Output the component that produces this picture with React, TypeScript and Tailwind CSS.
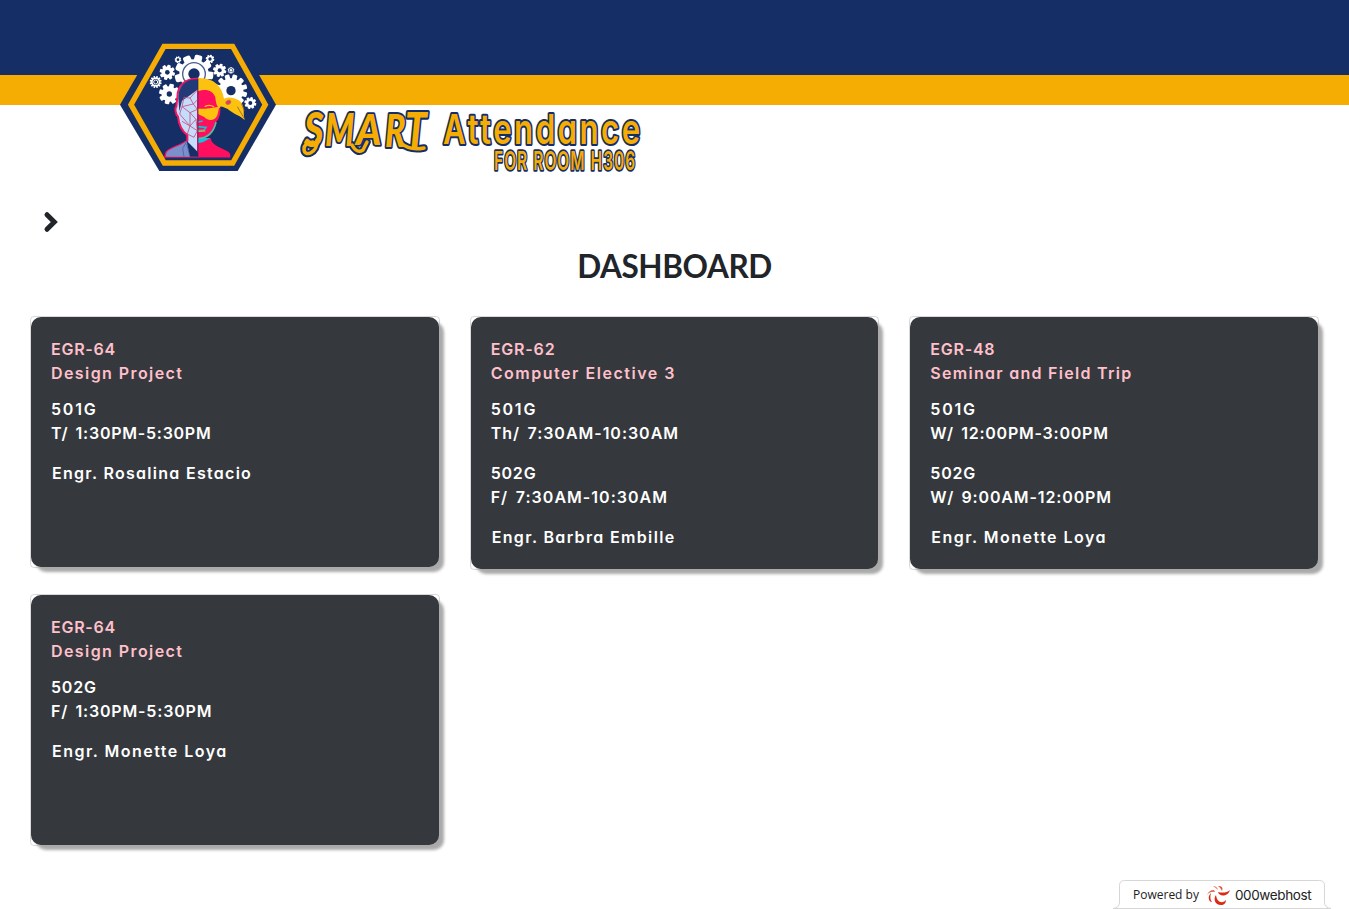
import { ReactNode } from "react";

type Line = { text: string; tracking: string };
type Course = { code: Line; title: Line; slots: [Line, Line][]; teacher: Line };

const s501: Line = { text: "501G", tracking: "tracking-[1.8px]" };
const s502: Line = { text: "502G", tracking: "tracking-[0.8px]" };

const courses: Course[] = [
  {
    code: { text: "EGR-64", tracking: "tracking-[0.75px]" },
    title: { text: "Design Project", tracking: "tracking-[1.42px]" },
    slots: [[s501, { text: "T/ 1:30PM-5:30PM", tracking: "tracking-[0.75px]" }]],
    teacher: { text: "Engr. Rosalina Estacio", tracking: "tracking-[1.29px]" },
  },
  {
    code: { text: "EGR-62", tracking: "tracking-[0.85px]" },
    title: { text: "Computer Elective 3", tracking: "tracking-[1.53px]" },
    slots: [
      [s501, { text: "Th/ 7:30AM-10:30AM", tracking: "tracking-[0.97px]" }],
      [s502, { text: "F/ 7:30AM-10:30AM", tracking: "tracking-[1.03px]" }],
    ],
    teacher: { text: "Engr. Barbra Embille", tracking: "tracking-[1.35px]" },
  },
  {
    code: { text: "EGR-48", tracking: "tracking-[0.75px]" },
    title: { text: "Seminar and Field Trip", tracking: "tracking-[1.28px]" },
    slots: [
      [s501, { text: "W/ 12:00PM-3:00PM", tracking: "tracking-[0.76px]" }],
      [s502, { text: "W/ 9:00AM-12:00PM", tracking: "tracking-[0.86px]" }],
    ],
    teacher: { text: "Engr. Monette Loya", tracking: "tracking-[1.48px]" },
  },
  {
    code: { text: "EGR-64", tracking: "tracking-[0.75px]" },
    title: { text: "Design Project", tracking: "tracking-[1.42px]" },
    slots: [[s502, { text: "F/ 1:30PM-5:30PM", tracking: "tracking-[0.82px]" }]],
    teacher: { text: "Engr. Monette Loya", tracking: "tracking-[1.48px]" },
  },
];

function TextLine({ line }: { line: Line }) {
  return <div className={line.tracking}>{line.text}</div>;
}

function CourseCard({ course }: { course: Course }) {
  return (
    <article className="self-start rounded border border-black/15">
      <div className="min-h-[250px] rounded-[10px] bg-[#35393d] p-5 text-base font-semibold text-white shadow-[5px_5px_3px_#aaa]">
        <div className="mb-3 text-[#ffc0cb]">
          <TextLine line={course.code} />
          <TextLine line={course.title} />
        </div>
        {course.slots.map(([section, time]) => (
          <div key={section.text} className="mb-4">
            <TextLine line={section} />
            <div className="[word-spacing:2.5px]">
              <TextLine line={time} />
            </div>
          </div>
        ))}
        <div className="pl-px">
          <TextLine line={course.teacher} />
        </div>
      </div>
    </article>
  );
}

type GearProps = { x: number; y: number; r: number; hole: number; teeth?: number; children?: ReactNode };

function Gear({ x, y, r, hole, teeth = 8, children }: GearProps) {
  const w = (r * 3.6) / teeth;
  return (
    <g transform={`translate(${x} ${y})`}>
      {Array.from({ length: teeth }, (_, i) => (
        <rect key={i} x={-w / 2} y={-r} width={w} height={r} rx={w / 4} transform={`rotate(${(i * 360) / teeth + 15})`} fill="#fff" />
      ))}
      <circle r={r * 0.76} fill="#fff" />
      <circle r={hole} fill="#152e66" />
      {children}
    </g>
  );
}

function Emblem() {
  return (
    <svg viewBox="0 0 540 450" className="h-[150px] w-[180px] shrink-0">
      <path d="M30 212 146 12H384L498 212 383 411H148Z" fill="#152e66" />
      <path d="M63 212 162 37H368L466 212 368 387H163Z" fill="none" stroke="#f6ad03" strokeWidth="16" />
      <Gear x={252} y={120} r={58} hole={17} teeth={9}>
        <circle r="34" fill="none" stroke="#4a5d8c" strokeWidth="4" />
      </Gear>
      <Gear x={363} y={170} r={49} hole={14} teeth={12} />
      <Gear x={178} y={180} r={31} hole={8} />
      <Gear x={172} y={115} r={23} hole={7} />
      <Gear x={329} y={109} r={20} hole={6} />
      <Gear x={421} y={207} r={18} hole={6} />
      <Gear x={300} y={75} r={13} hole={5} />
      <Gear x={204} y={77} r={10} hole={4} />
      <Gear x={137} y={144} r={18} hole={9} teeth={12}>
        <circle r="6" fill="none" stroke="#fff" strokeWidth="3" />
      </Gear>
      <Gear x={363} y={109} r={10} hole={6} teeth={12}>
        <circle r="4" fill="#fff" />
      </Gear>
      <path
        d="M264 134C226 133 201 154 202 192L199 218C194 222 196 240 204 248C206 270 212 288 232 304V320C210 338 172 342 168 358L166 369H264Z"
        fill="#c5dcfb"
        stroke="#f91461"
        strokeWidth="6"
      />
      <path d="M264 136C226 134 204 156 205 194L208 232L216 200L240 184L264 166Z" fill="#243a78" />
      <path d="M229 322C211 338 174 343 169 358V368H264V355Z" fill="#7b8fcb" />
      <path d="M230 320 264 355V368H240Z" fill="#152e66" />
      <path d="M230 322 218 344 222 368M230 330 240 368" fill="none" stroke="#4056a0" strokeWidth="2" />
      <path
        d="M262 168 240 192 222 190 216 218 250 210 262 226 240 236 216 218 209 240 240 276 258 256 240 236V276L216 262M258 256 262 290 240 276 232 300 252 310 262 290M240 192 250 210 264 196"
        fill="none"
        stroke="#c2527f"
        strokeWidth="2.5"
      />
      <path d="M264 312H300V330L264 340Z" fill="#12c4df" />
      <path d="M264 160H320L331 220C332 244 326 258 318 264C312 292 296 312 264 314Z" fill="#ff0f5d" />
      <path d="M264 314C296 312 312 292 318 264" fill="none" stroke="#58bba5" strokeWidth="5" />
      <path d="M264 328C280 326 290 318 302 312C304 338 350 346 358 356Q362 360 361 369H264Z" fill="#ff0f5d" />
      <path
        d="M264 132C310 130 336 156 342 194C364 184 394 198 398 214C404 228 399 240 404 258C390 244 370 240 352 224C342 222 336 216 331 218C328 228 318 218 316 190C308 168 286 164 264 172Z"
        fill="#fdc20f"
      />
      <path d="M382 218 402 252M395 210 403 230" stroke="#8a6241" strokeWidth="2.5" />
      <ellipse cx="355" cy="205" rx="8" ry="6" fill="#f2336b" stroke="#9a7944" strokeWidth="2" transform="rotate(-25 355 205)" />
      <path d="M264 224C282 226 302 222 328 218L322 244C314 262 294 262 284 250L264 240Z" fill="#fdc20f" />
      <path d="M284 218Q300 210 312 219" fill="none" stroke="#fdc20f" strokeWidth="4" />
      <path d="M264 264 278 261M264 278 288 280 282 288 264 290" fill="none" stroke="#18bfd2" strokeWidth="5" />
      <path d="M264 292 286 291" stroke="#e7c334" strokeWidth="3" />
      <path d="M264 134V369" stroke="#152e66" strokeWidth="2" />
      <path d="M165 371H361" stroke="#8e2362" strokeWidth="3" />
    </svg>
  );
}

const flourishes = "M317 140C318 153 304 158 304 149Q304 143 313 142M352 145Q357 154 363 150L367 142M401 143Q410 151 424 148";

function Wordmark() {
  return (
    <svg
      viewBox="296 84 370 100"
      className="h-[100px] w-[370px] shrink-0 font-['Inter'] [font-feature-settings:'cv11']"
      fill="#f6ad03"
      stroke="#152e66"
      strokeWidth="4"
      strokeLinejoin="round"
      paintOrder="stroke"
    >
      <path d={flourishes} fill="none" strokeLinecap="round" strokeWidth="7.5" />
      <g className="font-['Lato'] text-[46px] font-black italic">
        <text transform="translate(304 147) scale(.82 1.04)">S</text>
        <text transform="translate(325 146) scale(.72 .98)">M</text>
        <text transform="translate(356 145) scale(.84 .9)">A</text>
        <text transform="translate(385 147) scale(.74 .98)">R</text>
        <text transform="translate(405 147) scale(.84 1.02)">T</text>
      </g>
      <path d={flourishes} fill="none" stroke="#f6ad03" strokeLinecap="round" strokeWidth="3.5" />
      <text transform="translate(443 144) scale(.76 1)" className="text-[41px] font-semibold tracking-[3.3px]">
        Attendance
      </text>
      <text transform="translate(494 170) scale(.62 1)" strokeWidth="3.5" className="text-[25px] font-semibold tracking-[1.7px]">
        FOR ROOM H306
      </text>
    </svg>
  );
}

function HostBadge() {
  return (
    <div className="relative flex h-[29px] w-[218px] items-center pl-5">
      <svg viewBox="0 0 218 29" className="absolute inset-0 h-[29px] w-[218px]" fill="#fff" stroke="#d6d6d6">
        <path d="M0 28.500Q6.500 28 6.500 22V5.500Q6.500.5 11.500.5H206.500Q211.500.5 211.500 5.500V22Q211.500 28 218 28.500Z" />
      </svg>
      <span className="relative font-['Open_Sans'] text-[12px] text-[#222]">Powered by</span>
      <svg viewBox="0 0 24 22" className="relative ml-[7px] h-[22px] w-6" fill="#dc2a18">
        <path d="M10 11C7 15 9 21 15 21C18 21 20 19 20 16C18 19 11 20 10 11Z" />
        <path d="M12 8C13 13 22 13 24 6C21 9 16 9 12 8Z" />
        <path d="M5 9C1 13 3 18 6 18C4 16 4 12 5 9Z" />
        <path d="M8 6Q3 6 1 11Q4 7 9 8Z" opacity=".75" />
        <path d="M12 2Q18 2 16 7Q15 4 12 2Z" opacity=".8" />
        <path d="M7 2Q11 2 12 6Q10 4 7 2Z" opacity=".65" />
      </svg>
      <span className="relative ml-[5px] font-['Inter'] text-[13.5px] tracking-[-0.38px] text-[#222]">000webhost</span>
    </div>
  );
}

export default function App() {
  return (
    <div className="flex h-[909px] w-full flex-col overflow-hidden bg-white font-['Inter',sans-serif] leading-6 text-[#212529] [font-feature-settings:'cv11']">
      <header className="h-[200px] bg-[linear-gradient(#152e66_0_75px,#f6ad03_75px_105px,#fff_105px)] pl-[110px] pt-[34px]">
        <div className="flex items-end gap-[6px]">
          <Emblem />
          <Wordmark />
        </div>
      </header>
      <div className="flex h-11 items-center pl-[43px]">
        <svg viewBox="0 0 16 24" className="h-6 w-4" fill="none" stroke="#212529" strokeWidth="5" strokeLinecap="round">
          <path d="M4 4.700 11.300 12 4 19.300" />
        </svg>
      </div>
      <h1 className="text-center font-['Lato',sans-serif] text-[31.5px] font-bold leading-[45px] tracking-[-0.4px]">DASHBOARD</h1>
      <main className="mt-[27px] grid grid-cols-3 gap-x-[30px] gap-y-6 px-[30px]">
        {courses.map((course, i) => (
          <CourseCard key={i} course={course} />
        ))}
      </main>
      <footer className="mt-auto flex justify-end pr-[18px]">
        <HostBadge />
      </footer>
    </div>
  );
}
